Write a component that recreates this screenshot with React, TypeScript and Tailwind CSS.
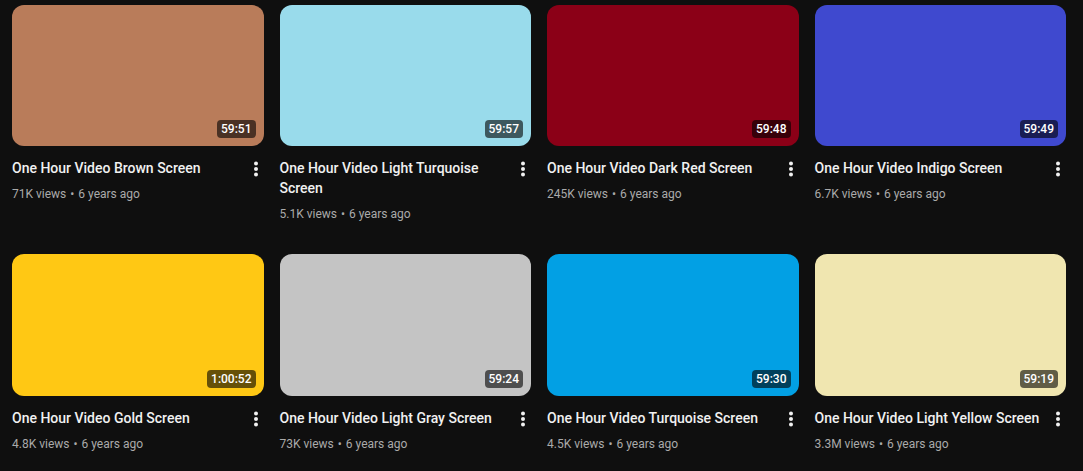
interface Video {
  title: string;
  views: string;
  age: string;
  duration: string;
  color: string;
}

const videos: Video[] = [
  { title: "One Hour Video Brown Screen", views: "71K views", age: "6 years ago", duration: "59:51", color: "bg-[#b97c5a]" },
  { title: "One Hour Video Light Turquoise Screen", views: "5.1K views", age: "6 years ago", duration: "59:57", color: "bg-[#99dbeb]" },
  { title: "One Hour Video Dark Red Screen", views: "245K views", age: "6 years ago", duration: "59:48", color: "bg-[#8b0017]" },
  { title: "One Hour Video Indigo Screen", views: "6.7K views", age: "6 years ago", duration: "59:49", color: "bg-[#3f49cf]" },
  { title: "One Hour Video Gold Screen", views: "4.8K views", age: "6 years ago", duration: "1:00:52", color: "bg-[#ffc814]" },
  { title: "One Hour Video Light Gray Screen", views: "73K views", age: "6 years ago", duration: "59:24", color: "bg-[#c4c4c4]" },
  { title: "One Hour Video Turquoise Screen", views: "4.5K views", age: "6 years ago", duration: "59:30", color: "bg-[#02a0e4]" },
  { title: "One Hour Video Light Yellow Screen", views: "3.3M views", age: "6 years ago", duration: "59:19", color: "bg-[#f0e6b0]" }
];

function MoreIcon() {
  return (
    <svg width="24" height="24" viewBox="0 0 24 24" fill="#f1f1f1">
      <circle cx="12" cy="6.5" r="2" />
      <circle cx="12" cy="12" r="2" />
      <circle cx="12" cy="17.5" r="2" />
    </svg>
  );
}

function VideoCard({ video }: { video: Video }) {
  return (
    <div className="flex flex-col">
      <div className={`relative aspect-video w-full rounded-xl ${video.color}`}>
        <span className="absolute right-2 bottom-2 rounded-[4px] bg-black/60 px-1 text-[12px] leading-[18px] font-medium text-white">
          {video.duration}
        </span>
      </div>

      <div className="mt-3 flex items-start">
        <div className="flex-1 pr-6">
          <h3 className="text-[14px] leading-5 font-medium text-[#f1f1f1]">{video.title}</h3>
          <p className="mt-[7px] text-[12px] leading-[18px] text-[#aaaaaa]">
            {video.views} <span className="mx-[1px]">•</span> {video.age}
          </p>
        </div>
        <div className="-mr-[4px] -ml-6 mt-[-1px] shrink-0">
          <MoreIcon />
        </div>
      </div>
    </div>
  );
}

export default function App() {
  return (
    <div className="h-[471px] w-[1083px] overflow-hidden bg-[#0f0f0f] pt-[5px] pl-[12px] font-['Roboto',sans-serif]">
      <div className="grid w-[1054px] grid-cols-4 gap-x-4 gap-y-[31px]">
        {videos.map((video) => (
          <VideoCard key={video.title} video={video} />
        ))}
      </div>
    </div>
  );
}
